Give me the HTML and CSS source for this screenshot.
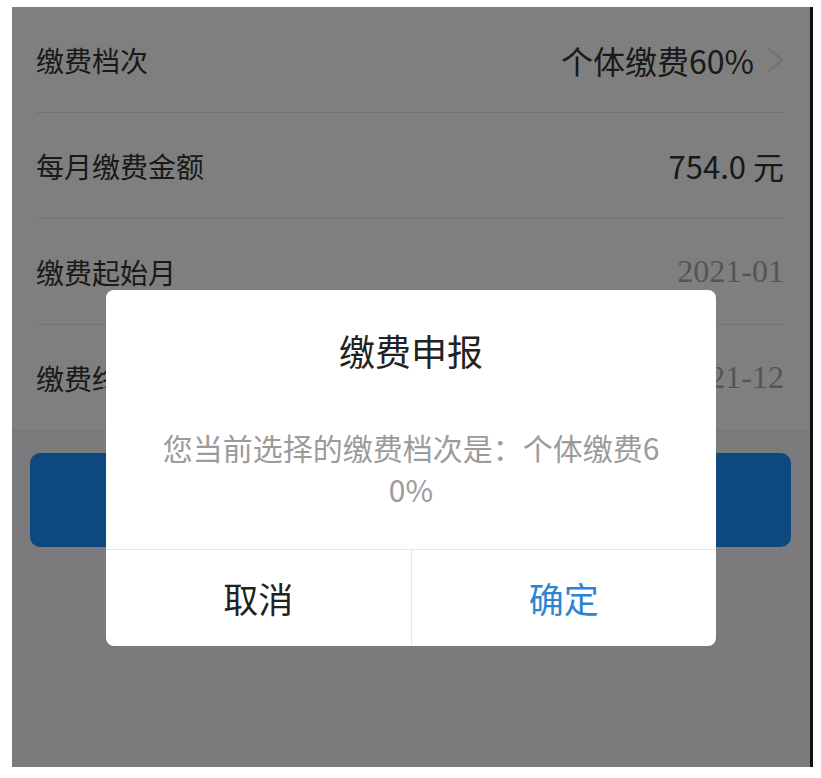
FILE: index.html
```html
<!DOCTYPE html>
<html lang="zh-CN">
<head>
    <meta charset="UTF-8">
    <meta name="viewport" content="width=device-width, initial-scale=1.0">
    <title>缴费申报</title>
    <link rel="stylesheet" href="styles.css">
</head>
<body>
    <div class="phone">
        <div class="list">
            <div class="row">
                <span class="label">缴费档次</span>
                <span class="value">个体缴费60%<svg class="arrow" width="20" height="28" viewBox="0 0 20 28"><polyline points="3,2 17,14 3,26" fill="none" stroke="#e2e2e2" stroke-width="2"/></svg></span>
            </div>
            <div class="row">
                <span class="label">每月缴费金额</span>
                <span class="value">754.0 元</span>
            </div>
            <div class="row">
                <span class="label">缴费起始月</span>
                <span class="value date">2021-01</span>
            </div>
            <div class="row">
                <span class="label">缴费终止月</span>
                <span class="value date">2021-12</span>
            </div>
        </div>

        <!-- 下一步按钮，被弹窗遮住 -->
        <a href="#" class="btn" aria-label="下一步"></a>

        <div class="mask">
            <div class="dialog">
                <h2>缴费申报</h2>
                <p>您当前选择的缴费档次是：个体缴费60%</p>
                <div class="actions">
                    <a href="#" class="cancel">取消</a>
                    <a href="#" class="ok">确定</a>
                </div>
            </div>
        </div>
    </div>
</body>
</html>
```

FILE: styles.css
```css
body {
    margin: 0;
    background: #fff;
    font-family: "Noto Sans CJK SC", "Noto Sans", sans-serif;
}
.phone {
    position: relative;
    margin: 7px 0 0 12px;
    width: 798px;
    height: 760px;
    background: #f6f4f8;
    border-right: 3px solid #111;
    overflow: hidden;
}
.list {
    background: #fff;
    border-bottom: 1px solid #e6e6e6;
}
.row {
    display: flex;
    align-items: center;
    justify-content: space-between;
    height: 105px;
    margin: 0 26px 0 24px;
    border-bottom: 1px solid #e6e6e6;
}
.row:last-child {
    border-bottom: none;
}
.label {
    font-size: 28px;
    color: #333;
}
.value {
    display: flex;
    align-items: center;
    font-size: 31px;
    color: #333;
}
.value:first-child,
.row:first-child .value {
    font-size: 32px;
}
.arrow {
    margin-left: 11px;
    margin-right: -1px;
}
.date {
    font-family: "Liberation Serif", serif;
    font-size: 32px;
    color: #ababab;
}
.btn {
    display: block;
    margin: 22px 19px 0 18px;
    height: 94px;
    border-radius: 10px;
    background: #1a92ff;
    text-decoration: none;
}
.mask {
    position: absolute;
    top: 0;
    left: 0;
    right: 0;
    bottom: 0;
    background: rgba(0, 0, 0, 0.5);
    display: flex;
    flex-direction: column;
    align-items: center;
    padding-top: 283px;
    box-sizing: border-box;
}
.dialog {
    width: 610px;
    background: #fff;
    border-radius: 8px;
    text-align: center;
    overflow: hidden;
}
.dialog h2 {
    margin: 40px 0 0;
    font-size: 36px;
    line-height: 40px;
    font-weight: 400;
    color: #222;
}
.dialog p {
    margin: 56px 0 39px;
    padding: 0 50px;
    font-size: 30px;
    line-height: 42px;
    color: #9b9b9b;
    word-break: break-all;
}
.actions {
    display: flex;
    border-top: 1px solid #e8e8e8;
}
.actions a {
    flex: 1;
    height: 96px;
    line-height: 96px;
    font-size: 35px;
    text-decoration: none;
}
.cancel {
    color: #222;
    border-right: 1px solid #e8e8e8;
}
.ok {
    color: #2c84d4;
}
```
